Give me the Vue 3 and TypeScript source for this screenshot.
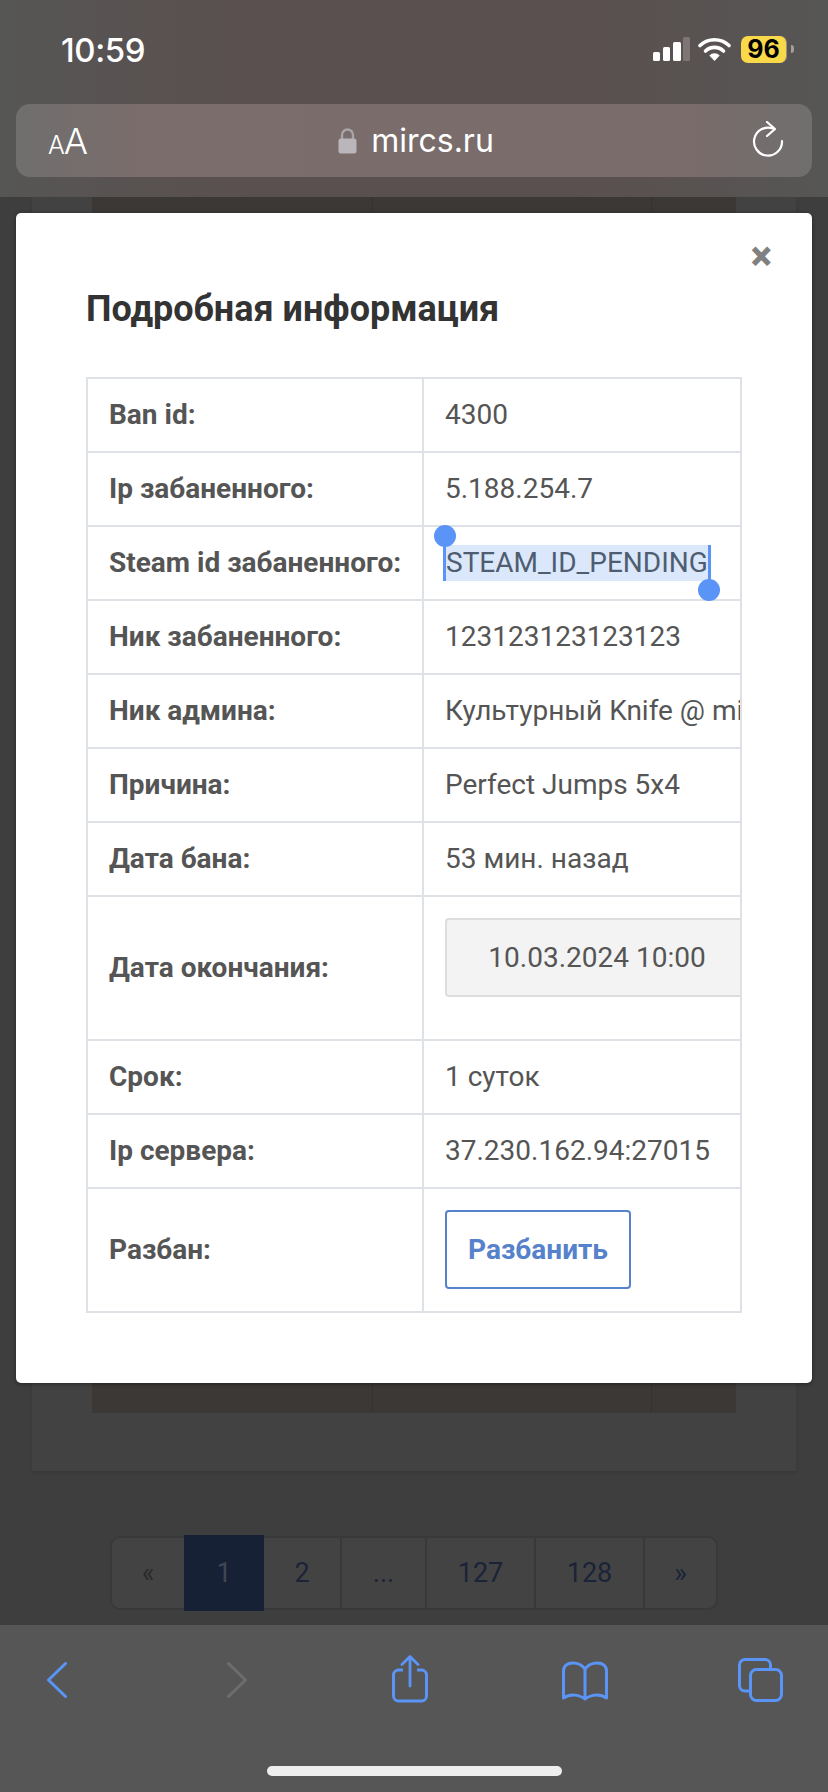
<script setup lang="ts">
interface InfoRow {
  label: string
  value: string
  kind?: 'selected' | 'date' | 'button'
}

const rows: InfoRow[] = [
  { label: 'Ban id:', value: '4300' },
  { label: 'Ip забаненного:', value: '5.188.254.7' },
  { label: 'Steam id забаненного:', value: 'STEAM_ID_PENDING', kind: 'selected' },
  { label: 'Ник забаненного:', value: '123123123123123' },
  { label: 'Ник админа:', value: 'Культурный Knife @ mircs.ru' },
  { label: 'Причина:', value: 'Perfect Jumps 5x4' },
  { label: 'Дата бана:', value: '53 мин. назад' },
  { label: 'Дата окончания:', value: '10.03.2024 10:00', kind: 'date' },
  { label: 'Срок:', value: '1 суток' },
  { label: 'Ip сервера:', value: '37.230.162.94:27015' },
  { label: 'Разбан:', value: 'Разбанить', kind: 'button' },
]

const pages = [
  { text: '«', cls: 'pg-first' },
  { text: '1', cls: 'pg-active' },
  { text: '2', cls: 'pg-two' },
  { text: '...', cls: 'pg-dots' },
  { text: '127', cls: 'pg-num' },
  { text: '128', cls: 'pg-num' },
  { text: '»', cls: 'pg-last' },
]
</script>

<template>
  <div class="screen">
    <header class="top">
      <div class="status">
        <span class="time">10:59</span>
        <div class="status-icons">
          <svg class="signal" width="37" height="24" viewBox="0 0 37 24">
            <rect x="0" y="15" width="7" height="9" rx="1.5" fill="#fff" />
            <rect x="10" y="10" width="7" height="14" rx="1.5" fill="#fff" />
            <rect x="20" y="5" width="8" height="19" rx="1.5" fill="#fff" />
            <rect x="30" y="0" width="7" height="24" rx="1.5" fill="#7d7674" />
          </svg>
          <svg class="wifi" width="33" height="24" viewBox="0 0 33 24">
            <path d="M2 8.500a21 21 0 0 1 29 0" fill="none" stroke="#fff" stroke-width="3.600" stroke-linecap="round" />
            <path d="M7.500 14a13 13 0 0 1 18 0" fill="none" stroke="#fff" stroke-width="3.600" stroke-linecap="round" />
            <path d="M16.500 24l-5.200-5.600a7.400 7.400 0 0 1 10.400 0z" fill="#fff" />
          </svg>
          <div class="battery"><span class="battery-level">96</span></div>
          <div class="battery-nub"></div>
        </div>
      </div>
      <div class="address">
        <span class="aa"><small>A</small>A</span>
        <div class="url">
          <svg width="19" height="26" viewBox="0 0 19 26">
            <path d="M4 11V7a5.500 5.500 0 0 1 11 0v4" fill="none" stroke="#a9a5a8" stroke-width="2.400" />
            <rect x="0.500" y="10.500" width="18" height="15" rx="2.500" fill="#bab6bb" />
          </svg>
          <span>mircs.ru</span>
        </div>
        <svg class="reload" width="32" height="37" viewBox="0 0 32 37">
          <path d="M21 7.500A14 14 0 1 0 30 20" fill="none" stroke="#fff" stroke-width="2.200" stroke-linecap="round" />
          <path d="M15 1l8 7-8 7" fill="none" stroke="#fff" stroke-width="2.200" stroke-linecap="round" stroke-linejoin="round" />
        </svg>
      </div>
    </header>

    <main class="page">
      <div class="behind-card">
        <div class="behind-table">
          <div class="behind-cell"></div>
          <div class="behind-cell"></div>
          <div class="behind-cell"></div>
        </div>
      </div>
      <nav class="pagination">
        <span v-for="p in pages" :key="p.text" :class="['pg', p.cls]">{{ p.text }}</span>
      </nav>
    </main>

    <footer class="toolbar">
      <div class="toolbar-icons">
        <svg class="ic-back" width="20" height="36" viewBox="0 0 20 36">
          <path d="M18.500 1.500L1.500 18l17 16.500" fill="none" stroke="#5a94f7" stroke-width="3" stroke-linecap="round" stroke-linejoin="round" />
        </svg>
        <svg class="ic-forward" width="20" height="36" viewBox="0 0 20 36">
          <path d="M1.500 1.500L18.500 18l-17 16.500" fill="none" stroke="#6d6d6d" stroke-width="3" stroke-linecap="round" stroke-linejoin="round" />
        </svg>
        <svg class="ic-share" width="38" height="48" viewBox="0 0 38 48">
          <path d="M12 15H7.500a5 5 0 0 0-5 5v21a5 5 0 0 0 5 5h23a5 5 0 0 0 5-5V20a5 5 0 0 0-5-5H26" fill="none" stroke="#5a94f7" stroke-width="3" />
          <path d="M19 2v29M11 9.500l8-8 8 8" fill="none" stroke="#5a94f7" stroke-width="2.800" stroke-linecap="round" stroke-linejoin="round" />
        </svg>
        <svg class="ic-book" width="48" height="40" viewBox="0 0 48 40">
          <path d="M24 8C21 4 17 2 12 2 6 2 2.500 5 2.500 10v27c6-4 15-4 21.500 1 6.500-5 15.500-5 21.500-1V10c0-5-3.500-8-9.500-8-5 0-9 2-12 6zM24 8v30" fill="none" stroke="#5a94f7" stroke-width="3" stroke-linejoin="round" />
        </svg>
        <svg class="ic-tabs" width="45" height="45" viewBox="0 0 45 45">
          <path d="M11 33H7a5.500 5.500 0 0 1-5.500-5.500V7A5.500 5.500 0 0 1 7 1.500h20A5.500 5.500 0 0 1 32.500 7v4" fill="none" stroke="#5a94f7" stroke-width="3" />
          <rect x="12.500" y="11.500" width="31" height="31" rx="6" fill="none" stroke="#5a94f7" stroke-width="3" />
        </svg>
      </div>
      <div class="home-bar"></div>
    </footer>

    <section class="modal">
      <span class="close">×</span>
      <h2 class="modal-title">Подробная информация</h2>
      <table class="info">
        <tbody>
          <tr v-for="row in rows" :key="row.label" :class="{ 'row-date': row.kind === 'date', 'row-btn': row.kind === 'button' }">
            <th>{{ row.label }}</th>
            <td :class="{ 'cell-selected': row.kind === 'selected' }">
              <span v-if="row.kind === 'selected'" class="selection">
                <i class="knob knob-start"></i>{{ row.value }}<i class="knob knob-end"></i>
              </span>
              <div v-else-if="row.kind === 'date'" class="date-box">{{ row.value }}</div>
              <button v-else-if="row.kind === 'button'" class="unban" type="button">{{ row.value }}</button>
              <template v-else>{{ row.value }}</template>
            </td>
          </tr>
        </tbody>
      </table>
    </section>
  </div>
</template>

<style>
html,
body {
  margin: 0;
  background: #3d3d3d;
}
</style>

<style scoped>
.screen {
  position: relative;
  width: 828px;
  height: 1792px;
  overflow: hidden;
  display: flex;
  flex-direction: column;
  font-family: Roboto, "Liberation Sans", sans-serif;
  background: #3e3e3e;
}

.top {
  height: 197px;
  flex: none;
  box-sizing: border-box;
  padding: 0 16px;
  background: linear-gradient(90deg, #565655 0%, #5a504f 30%, #5a504f 70%, #565655 100%);
  color: #fff;
}

.status {
  height: 104px;
  box-sizing: border-box;
  display: flex;
  justify-content: space-between;
  padding: 33px 18px 0 45px;
}

.time {
  font-family: Inter, Roboto, sans-serif;
  font-size: 33px;
  font-weight: 500;
  line-height: 34px;
  letter-spacing: -0.4px;
}

.status-icons {
  display: flex;
  align-items: flex-start;
  padding-top: 3px;
}

.signal {
  margin-top: 1px;
}

.wifi {
  margin: 1px 0 0 8px;
}

.battery {
  width: 46px;
  height: 27px;
  margin-left: 10px;
  border-radius: 7px;
  background: #f9d949;
  border-right: 1px solid #9a9183;
  box-sizing: border-box;
  display: flex;
  align-items: center;
  justify-content: center;
}

.battery-level {
  font-family: Inter, Roboto, sans-serif;
  font-size: 25px;
  font-weight: 700;
  line-height: 27px;
  color: #000;
}

.battery-nub {
  width: 3px;
  height: 8px;
  margin: 9px 0 0 4px;
  border-radius: 0 4px 4px 0;
  background: #a59f9c;
}

.address {
  height: 73px;
  display: flex;
  align-items: center;
  justify-content: space-between;
  padding: 0 28px 0 32px;
  border-radius: 14px;
  background: linear-gradient(90deg, #6f6f6e 0%, #7a6d6c 15%, #796c6b 85%, #6f6f6e 100%);
}

.aa {
  width: 40px;
  font-family: Inter, Roboto, sans-serif;
  font-size: 36px;
  font-weight: 300;
  line-height: 36px;
  letter-spacing: -1px;
  padding-top: 4px;
}

.aa small {
  font-size: 25px;
}

.url {
  display: flex;
  align-items: center;
  gap: 14px;
  font-family: Inter, Roboto, sans-serif;
  font-size: 32px;
  font-weight: 400;
  margin-left: -8px;
}

.reload {
  margin-top: -2px;
}

.page {
  flex: 1;
  min-height: 0;
  display: flex;
  flex-direction: column;
  align-items: center;
}

.behind-card {
  width: 764px;
  height: 1274px;
  flex: none;
  box-sizing: border-box;
  display: flex;
  justify-content: center;
  background: #424242;
  box-shadow: 0 2px 3px rgba(0, 0, 0, 0.12);
}

.behind-table {
  width: 644px;
  height: 1216px;
  display: grid;
  grid-template-columns: 281px 279px 84px;
  background: #3c3836;
}

.behind-cell {
  border-right: 1px solid #353130;
}

.behind-cell:last-child {
  border-right: 0;
}

.pagination {
  margin-top: 65px;
  height: 74px;
  width: 608px;
  box-sizing: border-box;
  display: flex;
  border: 2px solid #393939;
  border-radius: 10px;
  background: #434343;
  color: #1a2338;
  font-size: 27px;
}

.pg {
  display: flex;
  align-items: center;
  justify-content: center;
  border-right: 2px solid #393939;
}

.pg-first {
  width: 72px;
  border-right: 0;
  color: #2b2b2b;
}

.pg-active {
  width: 80px;
  margin: -3px 0;
  background: #172135;
  color: #3e4654;
  border-right: 0;
}

.pg-two {
  width: 76px;
}

.pg-dots {
  width: 83px;
}

.pg-num {
  width: 107px;
}

.pg-last {
  flex: 1;
  border-right: 0;
}

.toolbar {
  height: 167px;
  flex: none;
  background: #565656;
  display: flex;
  flex-direction: column;
}

.toolbar-icons {
  position: relative;
  height: 141px;
}

.toolbar-icons svg {
  position: absolute;
}

.ic-back {
  left: 47px;
  top: 37px;
}

.ic-forward {
  left: 227px;
  top: 37px;
}

.ic-share {
  left: 391px;
  top: 30px;
}

.ic-book {
  left: 561px;
  top: 36px;
}

.ic-tabs {
  left: 738px;
  top: 33px;
}

.home-bar {
  align-self: center;
  width: 295px;
  height: 10px;
  border-radius: 5px;
  background: #eeeeee;
}

.modal {
  position: absolute;
  left: 16px;
  top: 213px;
  width: 796px;
  height: 1170px;
  box-sizing: border-box;
  padding: 0 70px;
  background: #fff;
  border-radius: 5px;
  box-shadow: 0 1px 4px rgba(0, 0, 0, 0.4);
}

.close {
  position: absolute;
  right: 40px;
  top: 22px;
  font-size: 40px;
  font-weight: 900;
  line-height: 44px;
  color: #808080;
}

.modal-title {
  margin: 0;
  padding-top: 74px;
  height: 164px;
  box-sizing: border-box;
  font-size: 36px;
  line-height: 45px;
  font-weight: 700;
  color: #333;
}

.info {
  width: 656px;
  table-layout: fixed;
  border-collapse: collapse;
  font-size: 28px;
  color: #555;
}

.info th,
.info td {
  height: 74px;
  padding: 0 21px 2px;
  box-sizing: border-box;
  border: 2px solid #dee2e6;
  text-align: left;
  white-space: nowrap;
}

.info th {
  width: 336px;
  font-weight: 700;
}

.info td {
  overflow: hidden;
  font-weight: 400;
}

.info tr.row-date th,
.info tr.row-date td {
  height: 144px;
}

.info tr.row-btn th,
.info tr.row-btn td {
  height: 124px;
}

.info td.cell-selected {
  overflow: visible;
}

.selection {
  position: relative;
  display: inline-block;
  line-height: 36px;
  background: #dbe7fb;
  color: #4f5d70;
  border-left: 3px solid #5a94f7;
  border-right: 3px solid #5a94f7;
  margin-left: -2px;
  top: 1px;
}

.knob {
  position: absolute;
  width: 22px;
  height: 22px;
  border-radius: 50%;
  background: #5a94f7;
}

.knob-start {
  left: -12px;
  top: -20px;
}

.knob-end {
  right: -12px;
  bottom: -20px;
}

.date-box {
  width: 304px;
  height: 79px;
  margin-bottom: 19px;
  box-sizing: border-box;
  border: 2px solid #dddddd;
  border-radius: 4px;
  background: #f3f3f3;
  text-align: center;
  line-height: 75px;
}

.unban {
  display: block;
  width: 186px;
  height: 79px;
  padding: 0;
  border: 2px solid #5681cb;
  border-radius: 4px;
  background: #fff;
  color: #5681cb;
  font: 700 28px Roboto, sans-serif;
}
</style>
